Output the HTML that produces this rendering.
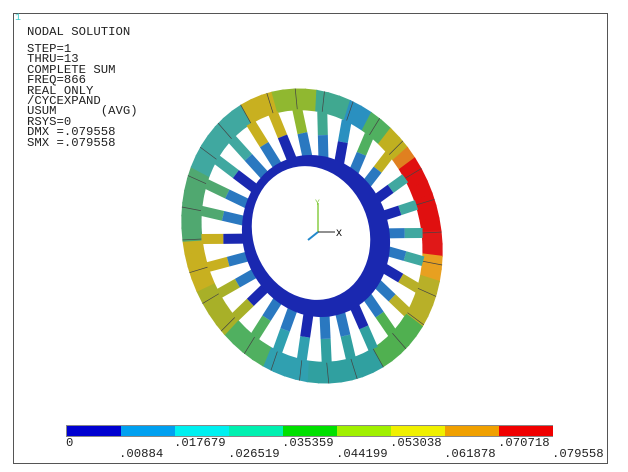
<!DOCTYPE html>
<html><head><style>
body{margin:0;background:#fff;width:628px;height:472px;overflow:hidden;position:relative;font-family:"Liberation Mono",monospace;}
.frame{position:absolute;left:13px;top:13px;width:593px;height:449px;border:1px solid #555;}
.t{position:absolute;font-size:12.3px;line-height:10.4px;color:#222;white-space:pre;}
.lbl{position:absolute;font-size:12.3px;color:#222;}
</style></head><body>
<div class="frame"></div>
<div class="t" style="left:15px;top:14px;color:#4cc;font-size:10px">1</div>
<div class="t" style="left:27px;top:27px">NODAL SOLUTION</div>
<div class="t" style="left:27px;top:44px">STEP=1
THRU=13
COMPLETE SUM
FREQ=866
REAL ONLY
/CYCEXPAND
USUM      (AVG)
RSYS=0
DMX =.079558
SMX =.079558</div>
<svg width="628" height="472" style="position:absolute;left:0;top:0" id="s"></svg>
<script>
var s=document.getElementById('s');
function P(cx,cy,rx,ry,rot,t){var r=rot*Math.PI/180,x=rx*Math.cos(t),y=ry*Math.sin(t);return [cx+x*Math.cos(r)-y*Math.sin(r),cy+x*Math.sin(r)+y*Math.cos(r)];}
function col(th){
 var stops=[[-180,'#50a870'],[-150,'#40a8a0'],[-120,'#c8b020'],[-105,'#90b830'],[-90,'#40a890'],[-75,'#2a90c0'],[-62,'#50b060'],[-52,'#c0b020'],[-42,'#e08020'],[-35,'#e01010'],[0,'#e01818'],[8,'#e8a020'],[22,'#b8b028'],[40,'#50b050'],[60,'#30a0a0'],[90,'#30a0b0'],[110,'#50b060'],[130,'#a8b028'],[155,'#c8b020'],[180,'#50a870']];
 for(var i=stops.length-1;i>=0;i--)if(th>=stops[i][0])return stops[i][1];return stops[0][1];}
var h='';
var OC=[312,236],ORX=128,ORY=150,OR=-20;
var N=72;
for(var i=0;i<N;i++){var t0=i/N*2*Math.PI,t1=(i+1.1)/N*2*Math.PI;
 var a=P(OC[0],OC[1],ORX,ORY,OR,t0),b=P(OC[0],OC[1],ORX,ORY,OR,t1),c=P(OC[0],OC[1],ORX-20,ORY-22,OR,t1),d=P(OC[0],OC[1],ORX-20,ORY-22,OR,t0);
 var m=P(OC[0],OC[1],ORX,ORY,OR,(t0+t1)/2);var th=Math.atan2(m[1]-OC[1],m[0]-OC[0])*180/Math.PI;
 h+='<polygon points="'+a+' '+b+' '+c+' '+d+'" fill="'+col(th)+'"/>';}
for(var i=0;i<28;i++){var t=i/28*2*Math.PI+0.05;var a=P(OC[0],OC[1],ORX,ORY,OR,t),d=P(OC[0],OC[1],ORX-20,ORY-22,OR,t);h+='<line x1="'+a[0]+'" y1="'+a[1]+'" x2="'+d[0]+'" y2="'+d[1]+'" stroke="#444" stroke-width="0.7"/>';}
var HC=[316,236],HRX=70,HRY=80,HR=-20;
for(var i=0;i<28;i++){var t=i/28*2*Math.PI+0.05;
 var a=P(HC[0],HC[1],HRX,HRY,HR,t),b=P(OC[0],OC[1],ORX-19,ORY-21,OR,t);
 var m=[(a[0]*0.5+b[0]*0.5),(a[1]*0.5+b[1]*0.5)];
 var th=Math.atan2(b[1]-OC[1],b[0]-OC[0])*180/Math.PI;
 var oc=col(th);if(oc=='#e01010'||oc=='#e01818'||oc=='#e8a020'||oc=='#e08020')oc='#40a8a0';
 h+='<line x1="'+m[0]+'" y1="'+m[1]+'" x2="'+b[0]+'" y2="'+b[1]+'" stroke="'+oc+'" stroke-width="10"/>';
 h+='<line x1="'+a[0]+'" y1="'+a[1]+'" x2="'+m[0]+'" y2="'+m[1]+'" stroke="'+(i%3==0?'#1a28b0':'#2a78c0')+'" stroke-width="10"/>';}
h+='<ellipse cx="316" cy="236" rx="73" ry="82" transform="rotate(-20 316 236)" fill="#1a28b0"/>';
h+='<ellipse cx="311" cy="233" rx="58" ry="68" transform="rotate(-20 311 233)" fill="#fff"/>';
h+='<line x1="318" y1="232" x2="318" y2="203" stroke="#8c4" stroke-width="1.5"/><line x1="318" y1="232" x2="335" y2="232" stroke="#222"/><line x1="318" y1="232" x2="308" y2="240" stroke="#28c" stroke-width="2"/><text x="336" y="236" font-size="10" font-family="Liberation Mono">X</text><text x="315" y="205" font-size="8" fill="#8c4">Y</text>';
var bc=['#0000d0','#00a0f0','#00f0f0','#00f0b0','#00e000','#a0f000','#f0f000','#f0a000','#f00000'];
h+='<rect x="66" y="425" width="487" height="12" fill="#888"/>';
for(var i=0;i<9;i++)h+='<rect x="'+(67+i*54)+'" y="426" width="54" height="10" fill="'+bc[i]+'"/>';
s.innerHTML=h;
</script>
<div class="lbl" style="left:66px;top:436px">0</div>
<div class="lbl" style="left:119px;top:447px">.00884</div>
<div class="lbl" style="left:174px;top:436px">.017679</div>
<div class="lbl" style="left:228px;top:447px">.026519</div>
<div class="lbl" style="left:282px;top:436px">.035359</div>
<div class="lbl" style="left:336px;top:447px">.044199</div>
<div class="lbl" style="left:390px;top:436px">.053038</div>
<div class="lbl" style="left:444px;top:447px">.061878</div>
<div class="lbl" style="left:498px;top:436px">.070718</div>
<div class="lbl" style="left:552px;top:447px">.079558</div>
</body></html>
